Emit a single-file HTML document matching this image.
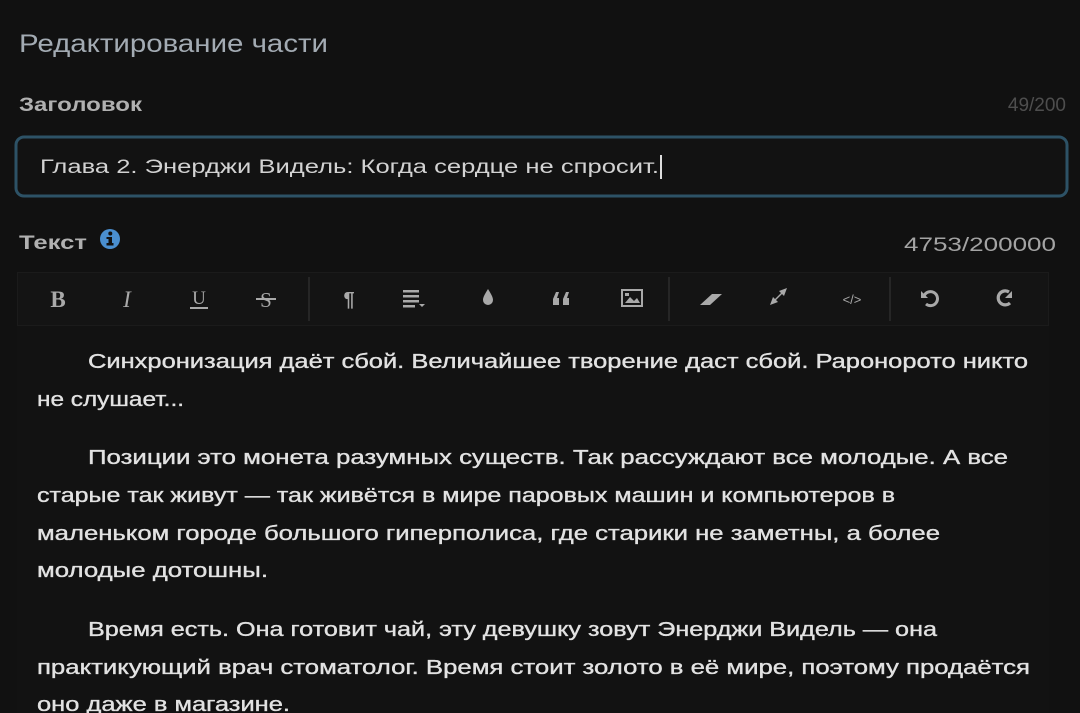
<!DOCTYPE html>
<html><head><meta charset="utf-8">
<style>
html,body{margin:0;padding:0;background:#111111;}
body{width:1080px;height:713px;overflow:hidden;position:relative;}
svg{position:absolute;left:0;top:0;}
.s{font-family:"Liberation Sans","DejaVu Sans",sans-serif;}
.r{font-family:"Liberation Serif","DejaVu Serif",serif;}
</style></head><body>
<svg width="1080" height="713" viewBox="0 0 1080 713" xmlns="http://www.w3.org/2000/svg">
<rect width="1080" height="713" fill="#111111"/>
<text class="s" x="19" y="52" font-size="25" fill="#a3abb3" textLength="309" lengthAdjust="spacingAndGlyphs">Редактирование части</text>
<text class="s" x="19" y="111" font-size="19" font-weight="bold" fill="#b0b0b0" textLength="123" lengthAdjust="spacingAndGlyphs">Заголовок</text>
<text class="s" x="1066" y="111" font-size="19" fill="#4e4e4e" text-anchor="end">49/200</text>
<rect x="16" y="137" width="1051" height="59" rx="8" fill="#121212" stroke="#2d5266" stroke-width="3"/>
<text class="s" x="40" y="173" font-size="19" fill="#d2d2d2" textLength="619" lengthAdjust="spacingAndGlyphs">Глава 2. Энерджи Видель: Когда сердце не спросит.</text>
<rect x="660" y="155" width="2" height="24" fill="#dddddd"/>
<text class="s" x="19" y="249" font-size="19" font-weight="bold" fill="#b0b0b0" textLength="68" lengthAdjust="spacingAndGlyphs">Текст</text>
<circle cx="110" cy="239" r="10" fill="#4a8fd0"/>
<rect x="108.5" y="237" width="3.5" height="8" fill="#111"/>
<rect x="106.5" y="243" width="7" height="2.5" fill="#111"/>
<rect x="106.5" y="237" width="4" height="2" fill="#111"/>
<circle cx="110.3" cy="233.5" r="2" fill="#111"/>
<text class="s" x="1056" y="251" font-size="19" fill="#a4a4a4" text-anchor="end" textLength="152" lengthAdjust="spacingAndGlyphs">4753/200000</text>
<rect x="17" y="272" width="1032" height="460" rx="4" fill="#121212"/>
<rect x="17.5" y="272.5" width="1031" height="53" fill="#141414" stroke="#1b1b1b"/>
<g fill="#a9a9a9">
<text class="r" x="58" y="307" font-size="23" font-weight="bold" text-anchor="middle">B</text>
<text class="r" x="127" y="307" font-size="23" font-style="italic" text-anchor="middle">I</text>
<text class="r" x="199" y="304" font-size="19" text-anchor="middle">U</text>
<rect x="190" y="307" width="18" height="2"/>
<text class="r" x="266" y="307" font-size="21" text-anchor="middle">S</text>
<rect x="256" y="298" width="20" height="2"/>
<text class="s" x="349" y="306" font-size="20" font-weight="bold" text-anchor="middle">¶</text>
<rect x="403" y="290" width="16" height="2.5"/><rect x="403" y="295" width="16" height="2.5"/><rect x="403" y="300" width="16" height="2.5"/><rect x="403" y="305" width="12" height="2.5"/>
<path d="M419 304h6l-3 3z"/>
<path d="M488 289c-3 5-5 8-5 11a5 5 0 0 0 10 0c0-3-2-6-5-11z"/>
<path d="M559 305h-6v-6l3-7h3l-2 6h2zM569 305h-6v-6l3-7h3l-2 6h2z"/>
<rect x="622" y="290" width="20" height="16" fill="none" stroke="#a9a9a9" stroke-width="2"/>
<path d="M625 303l5-6 4 4 3-3 3 5z"/><rect x="625" y="293" width="4" height="3"/>
<path d="M700 305l12-11h10l-12 11z"/>
<path d="M770 305l3-8 2 2 6-6-2-2 8-3-3 8-2-2-6 6 2 2z"/>
</g>
<text class="s" x="852" y="304" font-size="13" fill="#a9a9a9" text-anchor="middle">&lt;/&gt;</text>
<path d="M924 296a7 7 0 1 1 2 8" fill="none" stroke="#a9a9a9" stroke-width="3"/>
<path d="M921 291v7h7z" fill="#a9a9a9"/>
<path d="M1009 292a7 7 0 1 0 1 11" fill="none" stroke="#a9a9a9" stroke-width="3.2"/>
<path d="M1012 291v7h-7z" fill="#a9a9a9"/>
<rect x="308" y="277" width="2" height="44" fill="#262626"/>
<rect x="668" y="277" width="2" height="44" fill="#262626"/>
<rect x="889" y="277" width="2" height="44" fill="#262626"/>
<g class="s" font-size="20" fill="#e2e2e2" stroke="#e2e2e2" stroke-width="0.35">
<text x="88" y="368" textLength="940" lengthAdjust="spacingAndGlyphs">Синхронизация даёт сбой. Величайшее творение даст сбой. Раронорото никто</text>
<text x="37" y="406" textLength="147" lengthAdjust="spacingAndGlyphs">не слушает...</text>
<text x="88" y="464" textLength="920" lengthAdjust="spacingAndGlyphs">Позиции это монета разумных существ. Так рассуждают все молодые. А все</text>
<text x="37" y="502" textLength="858" lengthAdjust="spacingAndGlyphs">старые так живут — так живётся в мире паровых машин и компьютеров в</text>
<text x="37" y="540" textLength="903" lengthAdjust="spacingAndGlyphs">маленьком городе большого гиперполиса, где старики не заметны, а более</text>
<text x="37" y="577" textLength="231" lengthAdjust="spacingAndGlyphs">молодые дотошны.</text>
<text x="88" y="636" textLength="849" lengthAdjust="spacingAndGlyphs">Время есть. Она готовит чай, эту девушку зовут Энерджи Видель — она</text>
<text x="37" y="674" textLength="993" lengthAdjust="spacingAndGlyphs">практикующий врач стоматолог. Время стоит золото в её мире, поэтому продаётся</text>
<text x="37" y="711" textLength="253" lengthAdjust="spacingAndGlyphs">оно даже в магазине.</text>
</g>
</svg>
</body></html>
